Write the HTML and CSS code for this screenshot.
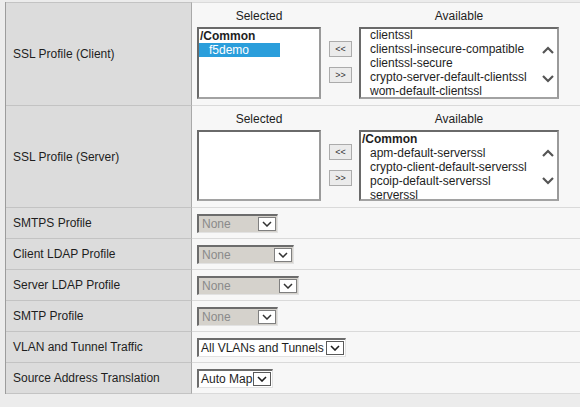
FILE: index.html
```html
<!DOCTYPE html>
<html>
<head>
<meta charset="utf-8">
<link rel="stylesheet" href="styles.css">
</head>
<body>
<div class="form">
  <div class="row big first">
    <div class="label">SSL Profile (Client)</div>
    <div class="value top">
      <div class="dual">
        <div class="col">
          <div class="hdr">Selected</div>
          <div class="list w-sel">
            <div class="opt grp">/Common</div>
            <div class="opt child hl">f5demo</div>
          </div>
        </div>
        <div class="btns">
          <div class="btn">&lt;&lt;</div>
          <div class="btn">&gt;&gt;</div>
        </div>
        <div class="col">
          <div class="hdr">Available</div>
          <div class="list w-avail scrolled">
            <div class="opt child">clientssl</div>
            <div class="opt child">clientssl-insecure-compatible</div>
            <div class="opt child">clientssl-secure</div>
            <div class="opt child">crypto-server-default-clientssl</div>
            <div class="opt child">wom-default-clientssl</div>
            <svg class="chev up" width="12" height="8" viewBox="0 0 12 8"><polyline points="1,7 6,2 11,7" fill="none" stroke="#555" stroke-width="2.2"/></svg>
            <svg class="chev down" width="12" height="8" viewBox="0 0 12 8"><polyline points="1,1 6,6 11,1" fill="none" stroke="#555" stroke-width="2.2"/></svg>
          </div>
        </div>
      </div>
    </div>
  </div>
  <div class="row big second">
    <div class="label">SSL Profile (Server)</div>
    <div class="value top">
      <div class="dual">
        <div class="col">
          <div class="hdr">Selected</div>
          <div class="list w-sel"></div>
        </div>
        <div class="btns">
          <div class="btn">&lt;&lt;</div>
          <div class="btn">&gt;&gt;</div>
        </div>
        <div class="col">
          <div class="hdr">Available</div>
          <div class="list w-avail">
            <div class="opt grp">/Common</div>
            <div class="opt child">apm-default-serverssl</div>
            <div class="opt child">crypto-client-default-serverssl</div>
            <div class="opt child">pcoip-default-serverssl</div>
            <div class="opt child">serverssl</div>
            <svg class="chev up" width="12" height="8" viewBox="0 0 12 8"><polyline points="1,7 6,2 11,7" fill="none" stroke="#555" stroke-width="2.2"/></svg>
            <svg class="chev down" width="12" height="8" viewBox="0 0 12 8"><polyline points="1,1 6,6 11,1" fill="none" stroke="#555" stroke-width="2.2"/></svg>
          </div>
        </div>
      </div>
    </div>
  </div>
  <div class="row">
    <div class="label">SMTPS Profile</div>
    <div class="value">
      <div class="sel disabled w81"><span class="sel-text">None</span><span class="sel-arrow"><svg width="10" height="6" viewBox="0 0 10 6"><polyline points="1,1 5,5 9,1" fill="none" stroke="#333" stroke-width="1.5"/></svg></span></div>
    </div>
  </div>
  <div class="row">
    <div class="label">Client LDAP Profile</div>
    <div class="value">
      <div class="sel disabled w97"><span class="sel-text">None</span><span class="sel-arrow"><svg width="10" height="6" viewBox="0 0 10 6"><polyline points="1,1 5,5 9,1" fill="none" stroke="#333" stroke-width="1.5"/></svg></span></div>
    </div>
  </div>
  <div class="row">
    <div class="label">Server LDAP Profile</div>
    <div class="value">
      <div class="sel disabled w102"><span class="sel-text">None</span><span class="sel-arrow"><svg width="10" height="6" viewBox="0 0 10 6"><polyline points="1,1 5,5 9,1" fill="none" stroke="#333" stroke-width="1.5"/></svg></span></div>
    </div>
  </div>
  <div class="row">
    <div class="label">SMTP Profile</div>
    <div class="value">
      <div class="sel disabled w81"><span class="sel-text">None</span><span class="sel-arrow"><svg width="10" height="6" viewBox="0 0 10 6"><polyline points="1,1 5,5 9,1" fill="none" stroke="#333" stroke-width="1.5"/></svg></span></div>
    </div>
  </div>
  <div class="row">
    <div class="label">VLAN and Tunnel Traffic</div>
    <div class="value">
      <div class="sel w149"><span class="sel-text">All VLANs and Tunnels</span><span class="sel-arrow"><svg width="10" height="6" viewBox="0 0 10 6"><polyline points="1,1 5,5 9,1" fill="none" stroke="#1e1e1e" stroke-width="1.6"/></svg></span></div>
    </div>
  </div>
  <div class="row">
    <div class="label">Source Address Translation</div>
    <div class="value">
      <div class="sel w76"><span class="sel-text">Auto Map</span><span class="sel-arrow"><svg width="10" height="6" viewBox="0 0 10 6"><polyline points="1,1 5,5 9,1" fill="none" stroke="#1e1e1e" stroke-width="1.6"/></svg></span></div>
    </div>
  </div>
</div>
</body>
</html>
```

FILE: styles.css
```css
html, body {
  margin: 0;
  padding: 0;
}
body {
  background: #ececec;
  font-family: "Liberation Sans", Arial, sans-serif;
  font-size: 12px;
  color: #1e1e1e;
  width: 580px;
  height: 407px;
  overflow: hidden;
}
.form {
  margin: 2px 0 0 5px;
  border-left: 1px solid #9c9c9c;
}
.row {
  display: flex;
  box-sizing: border-box;
  height: 31px;
}
.row.first { height: 104px; }
.row.second { height: 102px; }
.label {
  box-sizing: border-box;
  width: 186px;
  flex: none;
  background: #dcdcdc;
  border-right: 1px solid #a9a9a9;
  border-bottom: 1px solid #c3c3c3;
  padding-left: 7px;
  display: flex;
  align-items: center;
}
.value {
  flex: 1;
  box-sizing: border-box;
  background: #f7f7f7;
  border-bottom: 1px solid #dadada;
  padding-left: 5px;
  display: flex;
  align-items: center;
}
.row.first .label { border-top: 1px solid #c3c3c3; }
.row.first .value { border-top: 1px solid #dadada; }
.value.top {
  align-items: flex-start;
  padding-top: 6px;
}
.dual {
  display: flex;
}
.col {
  display: flex;
  flex-direction: column;
}
.hdr {
  text-align: center;
  line-height: 14px;
  height: 14px;
  margin-bottom: 4px;
}
.list {
  position: relative;
  box-sizing: border-box;
  height: 72px;
  background: #fff;
  border: 2px solid;
  border-color: #6a6a6a #9a9a9a #a2a2a2 #6a6a6a;
  overflow: hidden;
}
.w-sel { width: 124px; }
.w-avail { width: 200px; }
.second .list { height: 71px; }
.opt {
  line-height: 14px;
  height: 14px;
  white-space: nowrap;
  padding-left: 2px;
}
.opt.grp { font-weight: bold; padding-left: 1px; }
.opt.child { padding-left: 9px; }
.opt.hl {
  background: #2a9edb;
  color: #fff;
  width: 81px;
  box-sizing: border-box;
  padding-left: 10px;
}
.scrolled .opt:first-child { margin-top: -1px; }
.chev {
  position: absolute;
  right: 3px;
}
.chev.up { top: 17px; }
.chev.down { top: 46px; }
.second .chev.down { top: 45px; }
.btns {
  display: flex;
  flex-direction: column;
  gap: 10px;
  padding-top: 32px;
  margin: 0 7px 0 8px;
}
.btn {
  box-sizing: border-box;
  width: 23px;
  height: 16px;
  border: 1px solid #ababab;
  background: #ebebeb;
  font-size: 9px;
  line-height: 14px;
  text-align: center;
  color: #333;
}
.sel {
  box-sizing: border-box;
  display: flex;
  align-items: center;
  height: 19px;
  border-top: 2px solid #6c6c6c;
  border-left: 2px solid #6c6c6c;
  border-right: 1px solid #e2e2e2;
  border-bottom: 1px solid #e2e2e2;
  background: #fff;
  padding-right: 1px;
}
.sel.disabled { background: #d5d2cc; }
.sel-text {
  flex: 1;
  padding-left: 2px;
  line-height: 16px;
  white-space: nowrap;
  overflow: hidden;
}
.sel.disabled .sel-text { color: #8a8a8a; padding-left: 3px; }
.sel-arrow {
  box-sizing: border-box;
  width: 18px;
  height: 14px;
  border: 1px solid #7f7f7f;
  background: #fff;
  display: flex;
  align-items: center;
  justify-content: center;
  flex: none;
}
.sel:not(.disabled) .sel-arrow { border-color: #5a5a5a; }
.w81 { width: 81px; }
.w97 { width: 97px; }
.w102 { width: 102px; }
.w149 { width: 149px; }
.w76 { width: 76px; }
```
